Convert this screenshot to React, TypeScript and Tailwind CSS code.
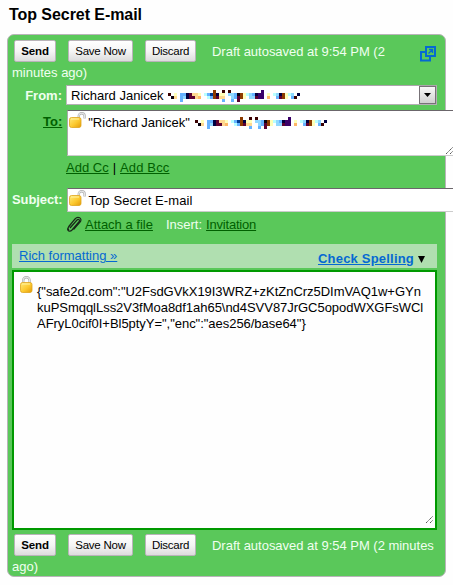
import React from 'react';

const INKS: Record<string, string> = {
  k: '#0a0010', n: '#000040', r: '#3a0000', b: '#8b3a00', m: '#5c0030', p: '#3a0068',
  u: '#66b2ff', l: '#90d8ff', c: '#b8ffff', y: '#ffffb8', o: '#ffd890', g: '#ffb666', d: '#003c90',
};

// Pixelated address: one letter per 3px cell, looked up in INKS.
const ROWS = [
  '...............b..r.r..........p............',
  'r.y.uunmooy.cudbnyy.llukbyclunpp.y.clnbycl.n',
  '.ko.ulnmmog..cubmoo..lumby.llmpp.g..umby.ur.',
  '....u.............u..u.m....................',
];

function Mosaic() {
  return (
    <svg width="132" height="12" viewBox="0 0 44 4" className="block shrink-0" shapeRendering="crispEdges">
      {ROWS.flatMap((row, y) =>
        row.split('').map((c, x) => (INKS[c] ? <rect key={`${x}-${y}`} x={x} y={y} width="1" height="1" fill={INKS[c]} /> : null)),
      )}
    </svg>
  );
}

function Lock({ open = false }: { open?: boolean }) {
  const shackle = open ? 'M9.8 7V4a2.9 2.8 0 0 1 5.8 0v2.5' : 'M3.2 8V4.4a3.2 3.2 0 0 1 6.4 0V8';
  const id = open ? 'gold-open' : 'gold-closed';
  return (
    <svg width="17" height="17" viewBox="0 0 17 17" className="block shrink-0">
      <defs>
        <linearGradient id={id} x1="0" y1="0" x2="1" y2="1">
          <stop offset="0" stopColor="#ffe97a" />
          <stop offset=".55" stopColor="#fcc92f" />
          <stop offset="1" stopColor="#e39a08" />
        </linearGradient>
      </defs>
      <path d={shackle} fill="none" stroke="#b0b0b0" strokeWidth="2.4" />
      <path d={shackle} fill="none" stroke="#e6e6e6" strokeWidth="1.1" />
      <rect x=".5" y={open ? 5.5 : 6.5} width="11.5" height="10" rx="2" fill={`url(#${id})`} stroke="#dfa51c" strokeWidth=".8" />
      <path d={open ? 'M2 7h8' : 'M2 8h8'} stroke="#fff3a0" strokeWidth="1" />
    </svg>
  );
}

function Button({ className, children }: { className: string; children: React.ReactNode }) {
  return (
    <button className={`h-[22px] shrink-0 rounded-[2px] border border-[#b9b4b9] bg-linear-to-b from-white via-[#f5f5f5] to-[#dcdcdc] p-0 text-center text-[11.5px] leading-[20px] whitespace-nowrap text-black ${className}`}>
      {children}
    </button>
  );
}

function Toolbar({ children }: { children: React.ReactNode }) {
  return (
    <div className="flex h-[22px] items-center pl-[2px]">
      <Button className="mr-3 w-[42px] font-bold tracking-[-0.15px]">Send</Button>
      <Button className="mr-3 w-[65px] tracking-[-0.25px]">Save Now</Button>
      <Button className="mr-4 w-[51px] tracking-[-0.25px]">Discard</Button>
      <span className="pt-[2px] tracking-[-0.02px] whitespace-nowrap text-[#f0fff0]">{children}</span>
    </div>
  );
}

function Grip() {
  return (
    <svg width="8" height="8" viewBox="0 0 8 8" className="block shrink-0">
      <path d="M0 7L7 0M4 7L7 4" stroke="#555" strokeWidth="1" strokeDasharray="1.4 .5" />
    </svg>
  );
}

export default function App() {
  return (
    <div className="h-[585px] w-[453px] overflow-hidden bg-[#fefefe] font-['Liberation_Sans',Arial,sans-serif] text-[13px] leading-4 text-black">
      <h1 className="h-[34px] pt-[5px] pl-[9px] text-[16px] leading-[20px] font-bold tracking-[-0.06px] whitespace-nowrap">Top Secret E-mail</h1>
      <main className="ml-[7px] h-[543px] w-[439px] rounded-[7px] border border-[#b9b4b9] bg-[#5ac85a] pt-[5px] pl-1">
        <div className="flex justify-between pr-[9px]">
          <Toolbar>Draft autosaved at 9:54 PM (2</Toolbar>
          <svg width="17" height="17" viewBox="0 0 17 17" className="mt-[5px] block shrink-0">
            <path d="M6 7H2v8.5h9V11" fill="none" stroke="#0569d2" strokeWidth="2" />
            <rect x="7" y="2" width="9" height="9" fill="#5ac85a" stroke="#0569d2" strokeWidth="2" />
            <path d="M9.5 8.5L13 5M10 4.5h3.5V8" fill="none" stroke="#0569d2" strokeWidth="1.3" />
          </svg>
        </div>
        <p className="mt-[2px] h-[21px] pt-[1px] leading-4 text-[#f0fff0]">minutes ago)</p>

        <div className="flex h-[25px] items-start">
          <label className="w-[50px] pt-[3px] text-right font-bold text-[#f0fff0]">From:</label>
          <div className="ml-1 flex h-[20px] w-[371px] border border-t-[#aaa5aa] border-r-[#b4afb4] border-b-[#b4afb4] border-l-[#bbb] bg-white">
            <span className="w-[101px] pt-px pl-[4px] leading-[17px] whitespace-nowrap">Richard Janicek</span>
            <div className="pt-[4px]"><Mosaic /></div>
            <div className="ml-auto flex h-[18px] w-[17px] items-center justify-center border border-[#777277] bg-linear-to-b from-[#f8f8f8] to-[#d0d0d0]">
              <svg width="7" height="4" viewBox="0 0 7 4"><path d="M0 0h7L3.5 4z" fill="#000" /></svg>
            </div>
          </div>
        </div>

        <div className="flex h-[50px] items-start">
          <a className="ml-[31px] w-[20px] pt-[4px] text-right font-bold text-[#006000] underline">To:</a>
          <div className="ml-[5px] flex h-[46px] w-[388px] shrink-0 border border-t-[#6b666b] border-r-[#ccc] border-b-[#ccc] border-l-[#aaa] bg-white">
            <div className="pt-px pl-px"><Lock open /></div>
            <span className="w-[109px] pt-[4px] pl-[2px] whitespace-nowrap">"Richard Janicek"</span>
            <div className="pt-[6px]"><Mosaic /></div>
            <div className="mt-[36px] ml-auto"><Grip /></div>
          </div>
        </div>
        <div className="h-[28px] pl-[54px] leading-4 whitespace-nowrap">
          <a className="text-[#006000] underline">Add Cc</a>
          <span className="px-[4px]">|</span>
          <a className="tracking-[0.15px] text-[#006000] underline">Add Bcc</a>
        </div>

        <div className="flex h-[28px] items-start">
          <label className="w-[51px] pt-[4px] text-right font-bold tracking-[-0.1px] whitespace-nowrap text-[#f0fff0]">Subject:</label>
          <div className="ml-[5px] flex h-[24px] w-[400px] shrink-0 border border-t-[#6b666b] border-b-[#ccc] border-l-[#aaa] bg-white">
            <div className="pt-px pl-px"><Lock open /></div>
            <span className="pt-[4px] pl-[2px] tracking-[0.08px] whitespace-nowrap">Top Secret E-mail</span>
          </div>
        </div>
        <div className="flex h-[28px] items-start pl-[54px] leading-[18px] whitespace-nowrap">
          <svg width="16" height="17" viewBox="0 0 16 17" className="mr-[3px] block shrink-0">
            <path d="M4 12L11 4c1.5-1.5 3.2 0 2 1.7L6 14c-2 2.2-5.5.8-4-2L9 3c3-3.5 7.7-.8 5.2 3L7.5 13.5M3 14c-1.5-1-1-2.5 0-4L9 3" fill="none" stroke="#182818" strokeWidth="1.2" />
          </svg>
          <a className="text-[#006000] underline">Attach a file</a>
          <span className="ml-[13px] text-[#f0fff0]">Insert:</span>
          <a className="ml-1 tracking-[-0.2px] text-[#006000] underline">Invitation</a>
        </div>

        <div className="flex h-[24px] w-[425px] justify-between bg-[#b0dfb0] pr-[12px] pl-[7px] whitespace-nowrap">
          <a className="pt-[4px] text-[#0569d2] underline">Rich formatting »</a>
          <div className="flex pt-[7px]">
            <a className="font-bold tracking-[0.2px] text-[#0569d2] underline">Check Spelling</a>
            <svg width="7" height="7" viewBox="0 0 7 7" className="mt-[5px] ml-1"><path d="M0 0h7L3.5 7z" fill="#000" /></svg>
          </div>
        </div>

        <div className="mt-[2px] flex h-[260px] w-[425px] border-2 border-[#090] bg-[#fefefe]">
          <div className="pt-[4px] pl-[6px]"><Lock /></div>
          <div className="pt-[12px] tracking-[-0.035px] whitespace-nowrap">
            <p>{'{"safe2d.com":"U2FsdGVkX19I3WRZ+zKtZnCrz5DImVAQ1w+GYn'}</p>
            <p>{'kuPSmqqlLss2V3fMoa8df1ah65\\nd4SVV87JrGC5opodWXGFsWCl'}</p>
            <p>{'AFryL0cif0I+Bl5ptyY=","enc":"aes256/base64"}'}</p>
          </div>
          <div className="mt-auto mr-px mb-1 ml-auto"><Grip /></div>
        </div>

        <div className="mt-[4px]">
          <Toolbar>Draft autosaved at 9:54 PM (2 minutes</Toolbar>
        </div>
        <p className="pt-[3px] text-[#f0fff0]">ago)</p>
      </main>
    </div>
  );
}
